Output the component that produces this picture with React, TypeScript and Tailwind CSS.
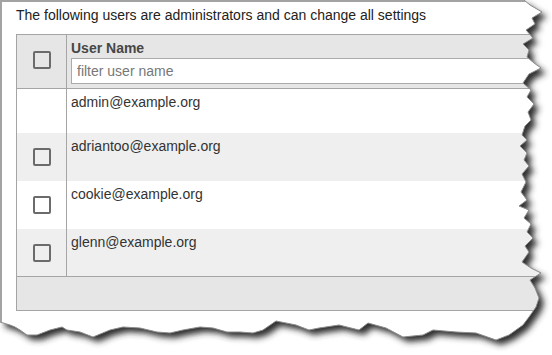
import React from "react";

const PTS: [number, number][] = [
  [524, 0], [530, 5], [542, 12], [532, 18], [535, 24], [526, 30], [533, 38], [523, 44], [529, 50], [527, 57],
  [534, 63], [541, 68], [529, 74], [523, 83], [531, 90], [527, 97], [534, 104], [528, 112], [531, 120], [525, 126],
  [522, 135], [527, 140], [520, 146], [527, 153], [524, 160], [529, 166], [522, 174], [526, 182], [521, 192],
  [527, 200], [519, 206], [529, 210], [524, 218], [531, 224], [527, 232], [533, 238], [525, 246], [529, 252],
  [522, 262], [531, 268], [541, 273], [530, 280], [535, 288], [539, 298], [536, 307], [529, 317], [523, 325],
  [509, 335], [496, 340], [476, 333], [456, 332], [433, 330], [423, 335], [403, 337], [386, 328], [368, 323],
  [359, 330], [339, 325], [319, 328], [309, 330], [296, 325], [276, 321], [263, 330], [253, 333], [240, 332],
  [227, 332], [213, 328], [200, 327], [183, 330], [170, 333], [157, 332], [140, 328], [123, 327], [110, 330],
  [93, 337], [80, 332], [67, 330], [62, 327], [50, 330], [37, 335], [27, 335], [20, 330], [15, 327], [10, 325],
  [0, 322],
];

const openPath = "M" + PTS.map(([x, y]) => `${x} ${y}`).join(" L");
const poly = openPath + " L0 0 Z";

function TornEdge() {
  return (
    <svg
      className="pointer-events-none absolute left-0 top-0"
      width={552}
      height={355}
      viewBox="0 0 552 355"
    >
      <defs>
        <filter id="tblur" x="-20%" y="-20%" width="140%" height="140%">
          <feGaussianBlur stdDeviation="3.2" />
        </filter>
        <clipPath id="outside">
          <path clipRule="evenodd" d={`M0 0H552V355H0Z ${poly}`} />
        </clipPath>
      </defs>
      <path d={`M0 0H552V355H0Z ${poly}`} fill="#ffffff" fillRule="evenodd" />
      <g clipPath="url(#outside)">
        <path d={poly} fill="#2e2e2e" transform="translate(5 5)" filter="url(#tblur)" />
      </g>
      <path d={openPath} fill="none" stroke="#8c8c8c" strokeWidth="1" />
    </svg>
  );
}

function Box() {
  return <div className="h-[18px] w-[18px] rounded-[2px] border-2 border-[#6b6b6b]" />;
}

const users = [
  { name: "admin@example.org", box: false, bg: "bg-white", h: "h-[44px]" },
  { name: "adriantoo@example.org", box: true, bg: "bg-[#efefef]", h: "h-[48px]" },
  { name: "cookie@example.org", box: true, bg: "bg-white", h: "h-[48px]" },
  { name: "glenn@example.org", box: true, bg: "bg-[#efefef]", h: "h-[47px]" },
];

export default function App() {
  return (
    <div
      className="relative h-[355px] w-[552px] overflow-hidden bg-white text-[14px] leading-[20px] text-[#333333]"
      style={{ fontFamily: '"Liberation Sans", Arial, sans-serif' }}
    >
      <div className="h-full border-l-2 border-t-2 border-[#a3a3a3] pl-[14px] pt-[3px]">
        <div className="whitespace-nowrap text-[#222222]">The following users are administrators and can change all settings</div>
        <div className="mt-[9px] w-[540px] border border-[#a5a5a5]">
          <div className="flex h-[54px] border-b border-[#a5a5a5] bg-[#e6e6e6]">
            <div className="flex w-[50px] shrink-0 justify-center border-r border-[#a5a5a5] pt-[16px]">
              <Box />
            </div>
            <div className="flex flex-col pl-[4px] pt-[3px]">
              <div className="font-bold text-[#474747]">User Name</div>
              <input
                className="h-[26px] w-[470px] border border-[#ababab] bg-white px-[5px] text-[14px] text-[#333] outline-none placeholder:text-[#777777]"
                placeholder="filter user name"
                style={{ fontFamily: '"Liberation Sans", Arial, sans-serif' }}
              />
            </div>
          </div>
          {users.map((u) => (
            <div key={u.name} className={`flex ${u.h} ${u.bg}`}>
              <div className="flex w-[50px] shrink-0 items-center justify-center border-r border-[#a5a5a5]">
                {u.box && <Box />}
              </div>
              <div className="pl-[4px] pt-[3px]">{u.name}</div>
            </div>
          ))}
          <div className="h-[34px] border-t border-[#a5a5a5] bg-[#e6e6e6]" />
        </div>
      </div>
      <TornEdge />
    </div>
  );
}
